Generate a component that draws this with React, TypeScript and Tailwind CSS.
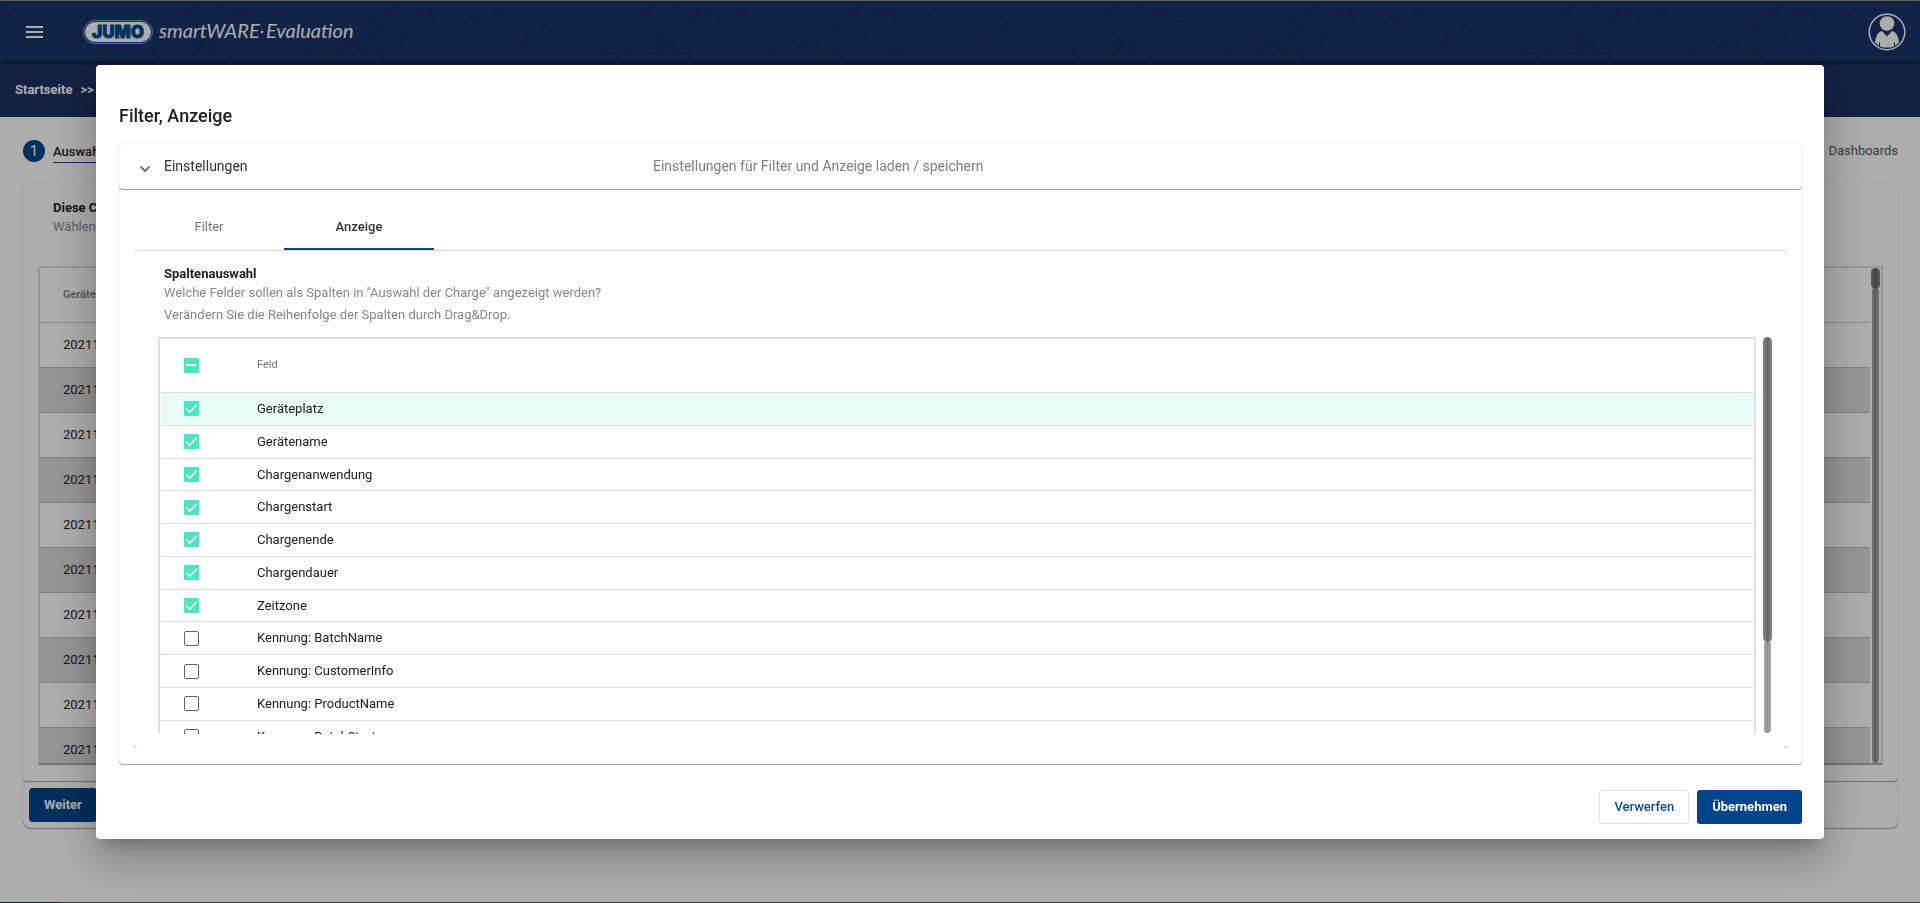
import React from "react";
import { ChevronDown } from "lucide-react";

const fields = [
  { name: "Geräteplatz", checked: true },
  { name: "Gerätename", checked: true },
  { name: "Chargenanwendung", checked: true },
  { name: "Chargenstart", checked: true },
  { name: "Chargenende", checked: true },
  { name: "Chargendauer", checked: true },
  { name: "Zeitzone", checked: true },
  { name: "Kennung: BatchName", checked: false },
  { name: "Kennung: CustomerInfo", checked: false },
  { name: "Kennung: ProductName", checked: false },
  { name: "Kennung: BatchStart", checked: false },
];

const batches = Array.from({ length: 10 }, (_, i) => ({ id: i, name: "20211" }));

const cardShadow =
  "shadow-[0_1px_1px_0_rgba(0,0,0,0.35),0_0_1px_0_rgba(0,0,0,0.25)]";

function HeaderPattern() {
  return (
    <svg className="absolute inset-0 size-full" aria-hidden="true">
      <defs>
        <pattern id="hex" width="460" height="60" patternUnits="userSpaceOnUse">
          <g fill="none" stroke="#18265a" strokeWidth="2.500" opacity="0.55">
            <path d="M0 9h6l7 11h12M33 9h11M8 52h12M68 40l-6 8M64 40l5-9h13l6-12" />
            <path d="M178 9h13l5-8M220 20h12l7-11h14M257 20h11M274 9h13M216 7l4-6" />
            <path d="M178 31h12M196 43l6-11M167 52h29l7-11h12M213 52h14l6 8M143 52h12l4 7" />
            <path d="M383 9h13l5-8M410 9h19l6 10M345 31h12M366 20h10l3 9-7 11M383 31h12M400 41l6-10h12" />
            <path d="M309 52h25l7-10h12l8 8M358 52h20l5 8M430 52h12" />
          </g>
        </pattern>
      </defs>
      <rect width="100%" height="100%" fill="url(#hex)" />
    </svg>
  );
}

function JumoLogo() {
  return (
    <svg width="276" height="26" viewBox="0 0 276 26" role="img" aria-label="JUMO smartWARE Evaluation">
      <rect x="0.500" y="1.500" width="69" height="23" rx="11.500" fill="#00498f" stroke="#7fa3cc" />
      <rect x="2" y="3" width="66" height="20" rx="10" fill="#fff" />
      <text
        x="35"
        y="19"
        textAnchor="middle"
        fill="#00498f"
        stroke="#00498f"
        strokeWidth="0.800"
        fontSize="17"
        fontWeight="900"
        fontFamily="Inter, sans-serif"
      >
        JUMO
      </text>
      <g fill="#fff" fontSize="20" fontStyle="italic" fontFamily="Lato, sans-serif">
        <text x="76" y="19">
          smartWARE
        </text>
        <circle cx="179" cy="13" r="1.300" />
        <text x="183" y="19">
          Evaluation
        </text>
      </g>
    </svg>
  );
}

function Avatar() {
  return (
    <svg width="38" height="38" viewBox="0 0 38 38" aria-hidden="true">
      <circle cx="19" cy="19" r="17.800" fill="none" stroke="#fff" strokeWidth="1.500" />
      <circle cx="19" cy="10.500" r="7.300" fill="#fff" />
      <path
        d="M14 18l5 5.500 5-5.500c4 1 6.300 5 7 11.500l-4 3.200v-3.500h-1v4.200c-4.500 1.600-9.500 1.600-14 0v-4.200h-1v3.500l-4-3.200c.7-6.500 3-10.500 7-11.500z"
        fill="#fff"
      />
    </svg>
  );
}

interface CheckboxProps {
  label: string;
  checked: boolean;
  indeterminate?: boolean;
}

function Checkbox({ label, checked, indeterminate }: CheckboxProps) {
  return (
    <label className="grid size-[15px] cursor-pointer">
      <input
        type="checkbox"
        aria-label={label}
        defaultChecked={checked}
        className="peer col-start-1 row-start-1 size-[15px] appearance-none rounded-[2px] border border-[#666] checked:rounded-[1px] checked:border-[#50e3c2] checked:bg-[#50e3c2]"
      />
      <svg
        viewBox="0 0 15 15"
        className="pointer-events-none invisible col-start-1 row-start-1 size-[15px] peer-checked:visible"
        fill="none"
        stroke="#fff"
      >
        {indeterminate ? (
          <path d="M2 7h10" strokeWidth="2" />
        ) : (
          <path d="M2.300 7.800l3.500 3.500 7-7.500" strokeWidth="1.400" />
        )}
      </svg>
    </label>
  );
}

function BatchPage() {
  return (
    <div className="flex min-h-screen flex-col bg-white">
      <div className="h-px bg-[#9d9b97]" />
      <header className="relative z-10 flex h-[60px] items-center bg-[#1a356b] pt-[2px] pr-[14px] pl-[24px] shadow-[0_2px_5px_rgba(0,0,0,0.5)]">
        <HeaderPattern />
        <button aria-label="Menü" className="relative flex w-[20px] flex-col gap-[3px]">
          <span className="ml-[2px] h-[2px] w-[17px] bg-white" />
          <span className="ml-[2px] h-[2px] w-[17px] bg-white" />
          <span className="ml-[2px] h-[2px] w-[17px] bg-white" />
        </button>
        <a href="#" className="relative ml-[39px]">
          <JumoLogo />
        </a>
        <button aria-label="Benutzer" className="relative ml-auto">
          <Avatar />
        </button>
      </header>
      <nav className="flex h-[56px] items-center gap-2 bg-[#203265] px-[15px] pt-[2px] text-[13px] font-bold text-white">
        <a href="#">Startseite</a>
        <span>&gt;&gt;</span>
      </nav>

      <main className="flex flex-col pr-[22px] pl-[23px]">
        <div className="flex h-[66px] items-center justify-between pt-[2px] text-[13px] text-[#555]">
          <div className="flex items-center gap-2">
            <span className="flex size-[22px] items-center justify-center rounded-full bg-[#00458a] text-[15px] text-white">
              1
            </span>
            <span className="border-b border-[#203d7a] pt-[2px] leading-[21px] font-medium text-[#222]">
              Auswahl
            </span>
          </div>
          <span>Dashboards</span>
        </div>

        <section className={`flex flex-col rounded px-[15px] pb-[16px] ${cardShadow}`}>
          <div className="px-[15px] pt-[15px] text-[13px] leading-[19px]">
            <h2 className="font-bold text-[#222]">Diese Chargen</h2>
            <p className="text-[#888]">Wählen</p>
          </div>
          <div className="mt-[30px] flex h-[499px] overflow-hidden border-2 border-[#dcdcdc] border-b-[#aaa]">
            <div className="grow overflow-hidden">
              <table className="w-full text-left text-[13px] text-[#222]">
                <thead>
                  <tr className="h-[54px] border-b border-[#ccc]">
                    <th className="pl-[23px] text-[11px] font-medium text-[#777]">Gerätename</th>
                  </tr>
                </thead>
                <tbody>
                  {batches.map((batch) => (
                    <tr key={batch.id} className="h-[45px] border-b border-[#bbb] even:bg-[#dcdcdc]">
                      <td className="pl-[23px]">{batch.name}</td>
                    </tr>
                  ))}
                </tbody>
              </table>
            </div>
            <div className="mx-px flex w-[9px] flex-col items-center">
              <div className="h-[21px] w-[9px] rounded-full bg-linear-to-r from-[#888] via-[#666] to-[#888]" />
              <div className="w-[7px] grow rounded-b-full bg-linear-to-r from-[#aaa] via-[#8c8c8c] to-[#aaa]" />
            </div>
          </div>
        </section>

        <footer className={`mt-[2px] flex rounded-lg px-[6px] pt-[5px] pb-[6px] ${cardShadow}`}>
          <button className="h-[34px] rounded bg-[#00458a] px-[15px] text-[13px] font-bold text-white">
            Weiter
          </button>
        </footer>
      </main>
      <div className="mt-auto h-px bg-[#5a5a5a]">
        <div className="h-px w-[60px] bg-[#1b3f60]" />
      </div>
    </div>
  );
}

function FieldTable() {
  return (
    <div className="mt-[13px] mr-[15px] ml-[24px] flex h-[397px] overflow-hidden">
      <div className="grow border-2 border-b-0 border-[#dfdfdf] px-px">
        <table className="h-[415px] w-full text-left text-[13px] text-[#212121]">
          <thead>
            <tr className="h-[54px] border-b border-[#dfdfdf]">
              <th className="w-[96px] pl-[23px]">
                <Checkbox label="Alle Felder" checked indeterminate />
              </th>
              <th className="text-[11px] font-normal text-[#777]">Feld</th>
            </tr>
          </thead>
          <tbody>
            {fields.map((field) => (
              <tr key={field.name} className="border-b border-[#dfdfdf] first:bg-[#e8fbf7]">
                <td className="pl-[23px]">
                  <Checkbox label={field.name} checked={field.checked} />
                </td>
                <td>{field.name}</td>
              </tr>
            ))}
          </tbody>
        </table>
      </div>
      <div className="ml-[7px] flex h-[396px] w-[9px] flex-col items-center">
        <div className="h-[305px] w-[9px] rounded-full bg-linear-to-r from-[#888] via-[#666] to-[#888]" />
        <div className="w-[7px] grow rounded-b-full bg-linear-to-r from-[#aaa] via-[#909090] to-[#aaa]" />
      </div>
    </div>
  );
}

export default function App() {
  return (
    <div className="font-[Roboto,sans-serif]">
      <BatchPage />
      <div className="fixed inset-0 z-20 flex items-center justify-center bg-black/32">
        <div
          role="dialog"
          aria-labelledby="dialog-title"
          className="flex w-[90%] flex-col rounded bg-white pt-[39px] pr-[22px] pb-[15px] pl-[23px] shadow-[0_11px_15px_-7px_rgba(0,0,0,0.2),0_24px_38px_3px_rgba(0,0,0,0.14),0_9px_46px_8px_rgba(0,0,0,0.12)]"
        >
          <h1 id="dialog-title" className="text-[18px] leading-[24px] font-medium text-[#212121]">
            Filter, Anzeige
          </h1>

          <button
            className={`mt-[16px] flex h-[45px] items-center rounded pl-[18px] text-left text-[14px] ${cardShadow}`}
          >
            <ChevronDown className="mt-[6px] size-4 text-[#777]" strokeWidth={3} />
            <span className="ml-[11px] w-[489px] text-[#333]">Einstellungen</span>
            <span className="text-[#808080]">
              Einstellungen für Filter und Anzeige laden / speichern
            </span>
          </button>

          <section className={`mt-px rounded px-[15px] pt-[14px] pb-[16px] ${cardShadow}`}>
            <div role="tablist" className="flex h-[47px] border-b border-[#dfdfdf] text-[13px]">
              <button role="tab" aria-selected="false" className="w-[150px] text-[#777]">
                Filter
              </button>
              <button
                role="tab"
                aria-selected="true"
                className="w-[150px] border-b-2 border-[#00458a] pt-[2px] font-medium text-[#333]"
              >
                Anzeige
              </button>
            </div>
            <div className="overflow-hidden">
              <div className={`rounded pt-[13px] pb-[14px] ${cardShadow}`}>
                <div className="ml-[30px] text-[13px]">
                  <h2 className="leading-[20px] font-bold text-[#212121]">Spaltenauswahl</h2>
                  <p className="leading-[18px] text-[#888]">
                    Welche Felder sollen als Spalten in "Auswahl der Charge" angezeigt werden?
                  </p>
                  <p className="mt-[4px] leading-[18px] text-[#888]">
                    Verändern Sie die Reihenfolge der Spalten durch Drag&amp;Drop.
                  </p>
                </div>
                <FieldTable />
              </div>
            </div>
          </section>

          <div className="mt-[26px] flex justify-end gap-2 text-[13px]">
            <button className="h-[34px] rounded-[3px] border border-[#dfdfdf] px-[14px] font-medium text-[#0f4c91]">
              Verwerfen
            </button>
            <button className="h-[34px] rounded-[3px] bg-[#00458a] px-[15px] font-bold text-white">
              Übernehmen
            </button>
          </div>
        </div>
      </div>
    </div>
  );
}
